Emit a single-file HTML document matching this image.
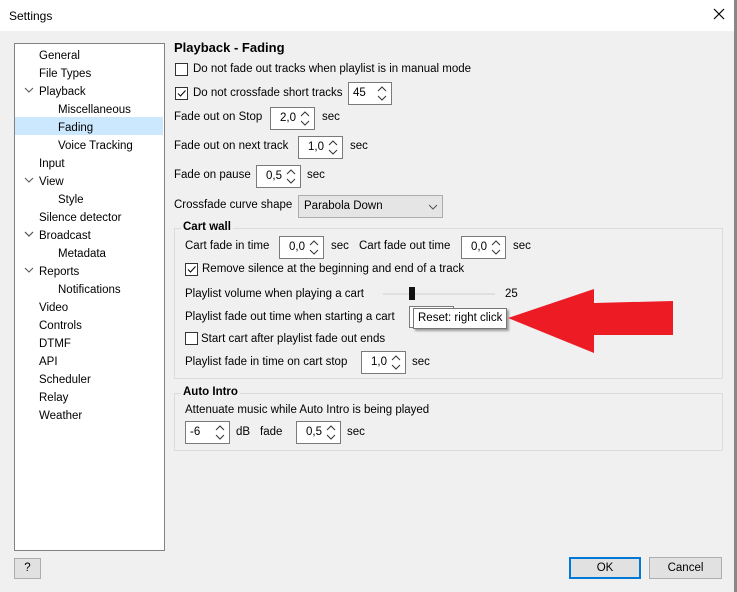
<!DOCTYPE html>
<html><head><style>
*{margin:0;padding:0;box-sizing:border-box}
body{width:737px;height:592px;background:#f0f0f0;font-family:"Liberation Sans",sans-serif;font-size:11.5px;color:#000;position:relative;overflow:hidden}
.a{position:absolute;white-space:nowrap}
.sp{position:absolute;height:23px;background:#fff;border:1px solid #7a7a7a}
.sp span{position:absolute;top:4px}
.sp svg{position:absolute;right:4px;top:3px}
.cb{position:absolute;width:13px;height:13px;border:1px solid #333;background:#fff}
.grp{position:absolute;border:1px solid #dcdcdc}
.grp b{position:absolute;top:-8px;left:6px;background:#f0f0f0;padding:0 2px}
</style></head><body>
<div class="a" style="left:0;top:0;width:734px;height:31px;background:#fff"></div>
<div class="a" style="left:9px;top:9px;font-size:12px">Settings</div>
<svg class="a" style="left:713px;top:8px" width="12" height="12"><path d="M1 1L11 11M11 1L1 11" stroke="#000" stroke-width="1.2"/></svg>
<div class="a" style="left:734px;top:0;width:3px;height:592px;background:#888"></div>

<div class="a" style="left:14px;top:43px;width:151px;height:508px;background:#fff;border:1px solid #828282"></div>
<div class="a" style="left:15px;top:117px;width:148px;height:18px;background:#cce8ff"></div>
<div class="a" style="left:39px;top:47px;line-height:18px">General<br>File Types<br>Playback<br><span style="padding-left:19px">Miscellaneous</span><br><span style="padding-left:19px">Fading</span><br><span style="padding-left:19px">Voice Tracking</span><br>Input<br>View<br><span style="padding-left:19px">Style</span><br>Silence detector<br>Broadcast<br><span style="padding-left:19px">Metadata</span><br>Reports<br><span style="padding-left:19px">Notifications</span><br>Video<br>Controls<br>DTMF<br>API<br>Scheduler<br>Relay<br>Weather</div>
<svg class="a" style="left:24px;top:86px" width="10" height="170"><g fill="none" stroke="#555"><path d="M1 2l4 4 4-4"/><path d="M1 92l4 4 4-4"/><path d="M1 146l4 4 4-4"/></g></svg>
<svg class="a" style="left:24px;top:230px" width="10" height="50"><g fill="none" stroke="#555"><path d="M1 2l4 4 4-4"/><path d="M1 38l4 4 4-4"/></g></svg>

<div class="a" style="left:174px;top:40px;font-weight:bold;font-size:13px">Playback - Fading</div>
<div class="cb" style="left:175px;top:63px"></div><div class="a" style="left:193px;top:63px">Do not fade out tracks when playlist is in manual mode</div>
<div class="cb" style="left:175px;top:87px"></div><svg class="a" style="left:176px;top:88px" width="11" height="11"><path d="M2 5.5l2.5 2.5 5-5.5" fill="none" stroke="#000"/></svg>
<div class="a" style="left:193px;top:87px">Do not crossfade short tracks</div>

<div class="sp" style="left:348px;top:82px;width:44px"><span style="left:4px">45</span><svg width="10" height="15"><path d="M1 5l4-4 4 4M1 10l4 4 4-4" fill="none" stroke="#333"/></svg></div>
<div class="a" style="left:174px;top:111px">Fade out on Stop</div>
<div class="sp" style="left:270px;top:107px;width:45px"><span style="left:9px">2,0</span><svg width="10" height="15"><path d="M1 5l4-4 4 4M1 10l4 4 4-4" fill="none" stroke="#333"/></svg></div><div class="a" style="left:322px;top:111px">sec</div>
<div class="a" style="left:174px;top:140px">Fade out on next track</div>
<div class="sp" style="left:298px;top:136px;width:45px"><span style="left:9px">1,0</span><svg width="10" height="15"><path d="M1 5l4-4 4 4M1 10l4 4 4-4" fill="none" stroke="#333"/></svg></div><div class="a" style="left:350px;top:140px">sec</div>
<div class="a" style="left:174px;top:169px">Fade on pause</div>
<div class="sp" style="left:256px;top:165px;width:45px"><span style="left:9px">0,5</span><svg width="10" height="15"><path d="M1 5l4-4 4 4M1 10l4 4 4-4" fill="none" stroke="#333"/></svg></div><div class="a" style="left:307px;top:169px">sec</div>
<div class="a" style="left:174px;top:199px">Crossfade curve shape</div>
<div class="a" style="left:298px;top:195px;width:145px;height:23px;background:#e5e5e5;border:1px solid #adadad"><span class="a" style="left:5px;top:4px">Parabola Down</span><svg class="a" style="left:129px;top:8px" width="10" height="6"><path d="M1 1l4 4 4-4" fill="none" stroke="#555"/></svg></div>

<div class="grp" style="left:174px;top:228px;width:549px;height:151px"><b>Cart wall</b></div>
<div class="a" style="left:185px;top:240px">Cart fade in time</div>
<div class="sp" style="left:279px;top:236px;width:45px"><span style="left:9px">0,0</span><svg width="10" height="15"><path d="M1 5l4-4 4 4M1 10l4 4 4-4" fill="none" stroke="#333"/></svg></div><div class="a" style="left:331px;top:240px">sec</div>
<div class="a" style="left:359px;top:240px">Cart fade out time</div>
<div class="sp" style="left:461px;top:236px;width:45px"><span style="left:9px">0,0</span><svg width="10" height="15"><path d="M1 5l4-4 4 4M1 10l4 4 4-4" fill="none" stroke="#333"/></svg></div><div class="a" style="left:513px;top:240px">sec</div>
<div class="cb" style="left:185px;top:263px"></div><svg class="a" style="left:186px;top:264px" width="11" height="11"><path d="M2 5.5l2.5 2.5 5-5.5" fill="none" stroke="#000"/></svg>
<div class="a" style="left:202px;top:263px">Remove silence at the beginning and end of a track</div>
<div class="a" style="left:185px;top:288px">Playlist volume when playing a cart</div>
<div class="a" style="left:383px;top:293px;width:112px;height:2px;background:#e0e0e0"></div>
<div class="a" style="left:409px;top:287px;width:6px;height:13px;background:#111"></div>
<div class="a" style="left:505px;top:288px">25</div>
<div class="a" style="left:185px;top:311px">Playlist fade out time when starting a cart</div>
<div class="a" style="left:409px;top:306px;width:45px;height:22px;background:#fff;border:1px solid #7a7a7a"></div>
<div class="a" style="left:413px;top:308px;width:94px;height:21px;background:#fff;border:1px solid #767676;box-shadow:2px 2px 2px rgba(0,0,0,.35)"><span class="a" style="left:4px;top:3px">Reset: right click</span></div>
<div class="cb" style="left:185px;top:332px"></div><div class="a" style="left:201px;top:333px">Start cart after playlist fade out ends</div>
<div class="a" style="left:185px;top:356px">Playlist fade in time on cart stop</div>
<div class="sp" style="left:361px;top:351px;width:45px"><span style="left:9px">1,0</span><svg width="10" height="15"><path d="M1 5l4-4 4 4M1 10l4 4 4-4" fill="none" stroke="#333"/></svg></div><div class="a" style="left:412px;top:356px">sec</div>

<svg class="a" style="left:505px;top:287px" width="172" height="68"><path d="M3 31L89 2L89 16L168 14L168 48L89 48L89 66Z" fill="#ed1c24"/></svg>

<div class="grp" style="left:174px;top:393px;width:549px;height:58px"><b>Auto Intro</b></div>
<div class="a" style="left:185px;top:404px">Attenuate music while Auto Intro is being played</div>
<div class="sp" style="left:185px;top:421px;width:45px"><span style="left:4px">-6</span><svg width="10" height="15"><path d="M1 5l4-4 4 4M1 10l4 4 4-4" fill="none" stroke="#333"/></svg></div>
<div class="a" style="left:236px;top:426px">dB</div><div class="a" style="left:260px;top:426px">fade</div>
<div class="sp" style="left:296px;top:421px;width:45px"><span style="left:9px">0,5</span><svg width="10" height="15"><path d="M1 5l4-4 4 4M1 10l4 4 4-4" fill="none" stroke="#333"/></svg></div><div class="a" style="left:347px;top:426px">sec</div>

<div class="a" style="left:14px;top:558px;width:27px;height:21px;background:#e1e1e1;border:1px solid #adadad;text-align:center;line-height:19px">?</div>
<div class="a" style="left:569px;top:557px;width:72px;height:22px;background:#e1e1e1;border:2px solid #0078d7;text-align:center;line-height:18px">OK</div>
<div class="a" style="left:649px;top:557px;width:73px;height:22px;background:#e1e1e1;border:1px solid #adadad;text-align:center;line-height:20px">Cancel</div>
</body></html>
